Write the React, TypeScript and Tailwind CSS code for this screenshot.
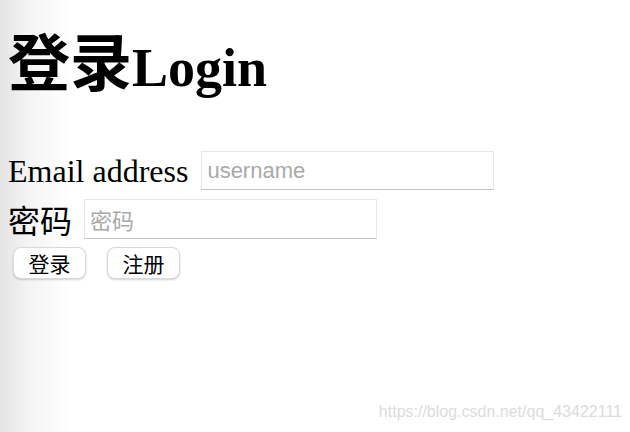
import React from "react";

const serif = "font-['Liberation_Serif','Times_New_Roman','Noto_Sans_CJK_SC',serif]";
const cjk = "font-['Noto_Sans_CJK_SC',sans-serif]";

export default function App() {
    const [email, setEmail] = React.useState("");
    const [password, setPassword] = React.useState("");

    const submit = (e: React.FormEvent<HTMLFormElement>) => {
        e.preventDefault();
        console.log({ email, password });
    };

    return (
        <div className="relative h-[432px] w-[630px] overflow-hidden bg-[linear-gradient(to_right,#e4e4e4,#f4f4f4_28px,#ffffff_70px)] pl-2 text-black">
            <h1 className="flex items-baseline pt-[28px] font-bold leading-none">
                <span className={`${cjk} text-[62px] font-bold`}>登录</span>
                <span className={`${serif} text-[54px] font-bold`}>Login</span>
            </h1>

            <form onSubmit={submit} className="mt-[56px] flex flex-col">
                <div className="flex h-[39px] items-center">
                    <label htmlFor="email" className={`${serif} text-[32px] leading-none`}>
                        Email address
                    </label>
                    <input
                        id="email"
                        type="text"
                        placeholder="username"
                        value={email}
                        onChange={e => setEmail(e.target.value)}
                        className="ml-[13px] h-[39px] w-[293px] border border-[#e6e6e6] border-b-[#c4c4c4] bg-white px-[5px] font-['Liberation_Sans',Arial,sans-serif] text-[22px] outline-none placeholder:text-[#a9a9a9]"
                    />
                </div>

                <div className="mt-[9px] flex h-[40px] items-center">
                    <label htmlFor="password" className={`${cjk} text-[32px] leading-none`}>
                        密码
                    </label>
                    <input
                        id="password"
                        type="password"
                        placeholder="密码"
                        value={password}
                        onChange={e => setPassword(e.target.value)}
                        className={`ml-[12px] h-[40px] w-[293px] border border-[#e6e6e6] border-b-[#c4c4c4] bg-white px-[5px] ${cjk} text-[22px] outline-none placeholder:text-[#a9a9a9]`}
                    />
                </div>

                <div className="mt-[8px] flex gap-[21px] pl-[5px]">
                    <button
                        type="submit"
                        className={`h-[32px] w-[73px] rounded-[8px] border border-[#d9d9d9] bg-white ${cjk} text-[21px] leading-none shadow-[0_1px_2px_rgba(0,0,0,0.18)]`}>
                        登录
                    </button>
                    <button
                        type="button"
                        className={`h-[32px] w-[73px] rounded-[8px] border border-[#d9d9d9] bg-white ${cjk} text-[21px] leading-none shadow-[0_1px_2px_rgba(0,0,0,0.18)]`}>
                        注册
                    </button>
                </div>
            </form>

            <div className="absolute right-[8px] bottom-[8px] font-['Liberation_Sans',Arial,sans-serif] text-[16px] text-[#dcdcdc]">
                https://blog.csdn.net/qq_43422111
            </div>
        </div>
    );
}
